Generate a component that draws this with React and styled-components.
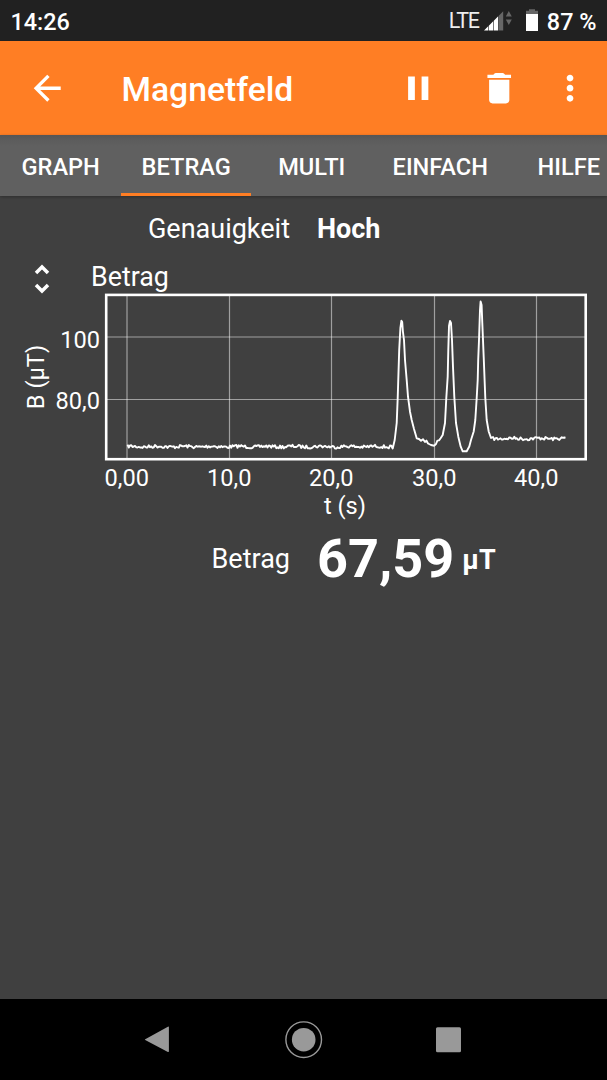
import React, { Component } from 'react';
import styled, { createGlobalStyle } from 'styled-components';

const GlobalStyle = createGlobalStyle`
  body {
    margin: 0;
    background: #404040;
  }
  * {
    box-sizing: border-box;
  }
`;

const Screen = styled.div`
  display: flex;
  flex-direction: column;
  width: 607px;
  height: 1080px;
  overflow: hidden;
  background: #404040;
  color: #fff;
  font-family: Roboto, sans-serif;
  white-space: nowrap;
`;

const StatusBar = styled.header`
  display: flex;
  align-items: center;
  flex: none;
  height: 40.5px;
  padding: 3px 10.5px 0 10.5px;
  background: #212121;
  font-size: 23.4px;
  font-weight: 500;
`;

const Clock = styled.span`
  flex: 1;
`;

const Network = styled.span`
  font-size: 21.5px;
  font-weight: 400;
  letter-spacing: -1.2px;
  color: #eee;
  margin: -2px 5px 0 0;
`;

const StatusIcons = styled.svg`
  display: block;
  flex: none;
  margin: -2px 8px 0 0;
`;

const Toolbar = styled.div`
  display: flex;
  align-items: center;
  flex: none;
  height: 94.5px;
  padding: 0 0 0 27px;
  background: #ff7e24;
`;

const Title = styled.h1`
  flex: 1;
  margin: 4px 0 0 54px;
  font-size: 33.7px;
  font-weight: 500;
  line-height: 40px;
`;

const Action = styled.button`
  display: flex;
  align-items: center;
  justify-content: center;
  flex: none;
  width: ${props => props.$width}px;
  height: 81px;
  padding: 0;
  border: 0;
  background: none;
  color: #fff;
`;

const Icon = styled.svg`
  display: block;
  width: 40.46px;
  height: 40.46px;
  fill: currentColor;
`;

const Tabs = styled.nav`
  display: flex;
  flex: none;
  height: 60.5px;
  background: linear-gradient(#555 0, #5c5c5c 5px, #606060 11px);
  box-shadow: 0 1px 3px rgba(0, 0, 0, 0.3);
`;

const Tab = styled.a`
  display: flex;
  align-items: center;
  justify-content: center;
  flex: none;
  min-width: 121.4px;
  padding: 6px 20.2px 0;
  border-bottom: 3.5px solid ${props => (props.$active ? '#ff7e24' : 'transparent')};
  font-size: 23.6px;
  font-weight: 500;
`;

const Content = styled.main`
  flex: 1;
  padding-top: 13px;
`;

const ValueRow = styled.div`
  display: grid;
  grid-template-columns: 1fr 1fr;
  column-gap: 27px;
  align-items: center;
  font-size: 27px;
  line-height: ${props => props.$height}px;
`;

const Label = styled.span`
  text-align: right;
`;

const Value = styled.span`
  display: flex;
  align-items: center;
  font-size: ${props => (props.$large ? 54 : 27)}px;
  font-weight: 700;
`;

const Unit = styled.span`
  margin: 2px 0 0 8px;
  font-size: 27px;
`;

const GraphHeader = styled.div`
  display: flex;
  align-items: center;
  height: 41.5px;
  padding: 14px 0 0 34px;
  font-size: 27px;
  line-height: 32px;
`;

const GraphTitle = styled.h2`
  margin: 2px 0 0 41px;
  font-size: 26.8px;
  font-weight: 400;
`;

const Unfold = styled.svg`
  display: block;
  margin-top: 5px;
  fill: none;
  stroke: #fff;
  stroke-width: 3.5;
`;

const GraphSvg = styled.svg`
  display: block;
  overflow: visible;
  font-family: Roboto, sans-serif;
  font-size: 23.6px;
  fill: #fff;
`;

const NavigationBar = styled.footer`
  flex: none;
  display: flex;
  align-items: center;
  justify-content: center;
  height: 81px;
  background: #000;
`;

const NavIcon = styled.svg`
  display: block;
  width: 145.6px;
  height: 40px;
  fill: #999;
`;

const tabs = ['GRAPH', 'BETRAG', 'MULTI', 'EINFACH', 'HILFE'];

const xTicks = [
  { x: 127, label: '0,00' },
  { x: 229.5, label: '10,0' },
  { x: 331.5, label: '20,0' },
  { x: 434.5, label: '30,0' },
  { x: 536.5, label: '40,0' }
];

const yTicks = [
  { y: 337, baseline: 348, label: '100' },
  { y: 399.5, baseline: 409.4, label: '80,0' }
];

const peaks = [
  [392.7, 448.5], [394.7, 440], [396.7, 423], [397.7, 398], [399.2, 350],
  [400.4, 328], [401.4, 320.7], [402.2, 322], [402.9, 331.5], [404, 340],
  [405, 360], [406.7, 380], [408, 396.7], [410, 411.7], [411.7, 420],
  [414, 429], [416.7, 438.3], [419, 439], [421, 440.8], [423, 439.2],
  [425, 441.9], [426.5, 440.6], [428, 443.5], [431, 445], [434.3, 445.7],
  [436, 444], [437.4, 440.6], [439, 440.4], [440.6, 438.2], [442.7, 435],
  [445, 423], [446.3, 398], [447.7, 376.5], [448.3, 350], [449, 326],
  [450, 321], [451, 323], [452, 340], [453, 367], [454.3, 396.7],
  [456, 423], [458.3, 436.7], [460.7, 446.7], [462.7, 451.3], [466.7, 451.3],
  [469.3, 446.5], [471, 440], [473.7, 431.5], [475.3, 420], [476.7, 398],
  [477.7, 380], [478.2, 360], [479, 340], [480, 310], [480.6, 301.5],
  [481.6, 305], [482.3, 323], [483.7, 357], [485.3, 398], [486.7, 420],
  [488.7, 431.5], [491, 438]
];

// small repeatable sensor jitter for the flat parts of the curve
const flat = (from, to, level) => {
  const points = [];
  let seed = 7;
  for (let x = from; x < to; x += 1.25) {
    seed = (seed * 16807) % 2147483647;
    const noise = seed / 2147483647 - 0.5;
    points.push([x, level + noise * 3.2 + Math.sin(x * 0.23) * 0.4]);
  }
  return points;
};

const curve = [
  ...flat(127.5, 392, 446.6),
  ...peaks,
  ...flat(493, 566, 438.5)
]
  .map(([x, y]) => `${x.toFixed(1)},${y.toFixed(1)}`)
  .join(' ');

const Graph = () => (
  <GraphSvg width="607" height="230" viewBox="0 290 607 230">
    <g stroke="#fff" strokeOpacity="0.5" strokeWidth="1.2">
      {xTicks.map(tick => (
        <line key={tick.label} x1={tick.x} x2={tick.x} y1="295" y2="459" />
      ))}
      {yTicks.map(tick => (
        <line key={tick.label} x1="107" x2="585" y1={tick.y} y2={tick.y} />
      ))}
    </g>
    <rect x="106.2" y="294.9" width="479.5" height="164.3" fill="none" stroke="#fff" strokeWidth="2.6" />
    <polyline points={curve} fill="none" stroke="#fff" strokeWidth="1.9" strokeLinejoin="round" />
    {xTicks.map(tick => (
      <text key={tick.label} x={tick.x - 0.2} y="486" textAnchor="middle">{tick.label}</text>
    ))}
    {yTicks.map(tick => (
      <text key={tick.label} x="100" y={tick.baseline} textAnchor="end">{tick.label}</text>
    ))}
    <text x="345" y="514" textAnchor="middle">t (s)</text>
    <text transform="translate(44 377) rotate(-90)" textAnchor="middle">B (µT)</text>
  </GraphSvg>
);

const SystemIcons = () => (
  <StatusIcons width="55" height="24" viewBox="484 9 55 24">
    <path d="M484 30.5l4.2-4.2v4.2zM488.8 25.7l4.4-4.4v9.2h-4.4zM493.8 20.7l4.4-4.4v14.2h-4.4z" fill="#fff" />
    <path d="M498.8 15.7l4.4-4.4v19.2h-4.4z" fill="#666" />
    <path d="M508.8 11l3 5.6h-6zM508.8 25l3-5.6h-6z" fill="#666" />
    <path d="M529 9.3h6v1.5h3v4h-12v-4h3z" fill="#666" />
    <path d="M526 14h12v17h-12z" fill="#fff" />
  </StatusIcons>
);

class App extends Component {
  state = { active: 'BETRAG' };

  render() {
    return (
      <Screen>
        <GlobalStyle />
        <StatusBar>
          <Clock>14:26</Clock>
          <Network>LTE</Network>
          <SystemIcons />
          <span>87 %</span>
        </StatusBar>
        <Toolbar>
          <Action $width={40.5} aria-label="Zurück">
            <Icon viewBox="0 0 24 24">
              <path d="M20 11H7.83l5.59-5.59L12 4l-8 8 8 8 1.41-1.41L7.83 13H20v-2z" />
            </Icon>
          </Action>
          <Title>Magnetfeld</Title>
          <Action $width={81} aria-label="Pause">
            <Icon viewBox="0 0 24 24">
              <path d="M6 19h4V5H6v14zm8-14v14h4V5h-4z" />
            </Icon>
          </Action>
          <Action $width={81} aria-label="Löschen">
            <Icon viewBox="0 0 24 24">
              <path d="M6 19c0 1.1.9 2 2 2h8c1.1 0 2-.9 2-2V7H6v12zM18 4h-2.5l-.71-.71c-.18-.18-.44-.29-.7-.29H9.91c-.26 0-.52.11-.7.29L8.5 4H5v2h14V4z" />
            </Icon>
          </Action>
          <Action $width={67} aria-label="Mehr">
            <Icon viewBox="1.9 0 24 24">
              <path d="M12 8c1.1 0 2-.9 2-2s-.9-2-2-2-2 .9-2 2 .9 2 2 2zm0 2c-1.1 0-2 .9-2 2s.9 2 2 2 2-.9 2-2-.9-2-2-2zm0 6c-1.1 0-2 .9-2 2s.9 2 2 2 2-.9 2-2-.9-2-2-2z" />
            </Icon>
          </Action>
        </Toolbar>
        <Tabs>
          {tabs.map(tab => (
            <Tab
              key={tab}
              $active={tab === this.state.active}
              onClick={() => this.setState({ active: tab })}
            >
              {tab}
            </Tab>
          ))}
        </Tabs>
        <Content>
          <ValueRow $height={40}>
            <Label>Genauigkeit</Label>
            <Value>Hoch</Value>
          </ValueRow>
          <GraphHeader>
            <Unfold width="16" height="32" viewBox="34 263 16 32">
              <path d="M36 273l6-6 6 6M36 285l6 6 6-6" />
            </Unfold>
            <GraphTitle>Betrag</GraphTitle>
          </GraphHeader>
          <Graph />
          <ValueRow $height={76}>
            <Label>Betrag</Label>
            <Value $large>
              67,59<Unit>µT</Unit>
            </Value>
          </ValueRow>
        </Content>
        <NavigationBar>
          <NavIcon viewBox="0 0 145.6 40">
            <path d="M60.2 19.3L82.9 6.7q1-.5 1 .6v24q0 1.1-1 .6L60.2 20.1q-.7-.4 0-.8z" />
          </NavIcon>
          <NavIcon viewBox="0 0 145.6 40">
            <circle cx="72.7" cy="19.7" r="11.8" />
            <circle cx="72.7" cy="19.7" r="17.8" fill="none" stroke="#999" strokeWidth="1.4" />
          </NavIcon>
          <NavIcon viewBox="0 0 145.6 40">
            <rect x="60" y="7.2" width="25" height="25" rx="1.5" />
          </NavIcon>
        </NavigationBar>
      </Screen>
    );
  }
}

export default App;
